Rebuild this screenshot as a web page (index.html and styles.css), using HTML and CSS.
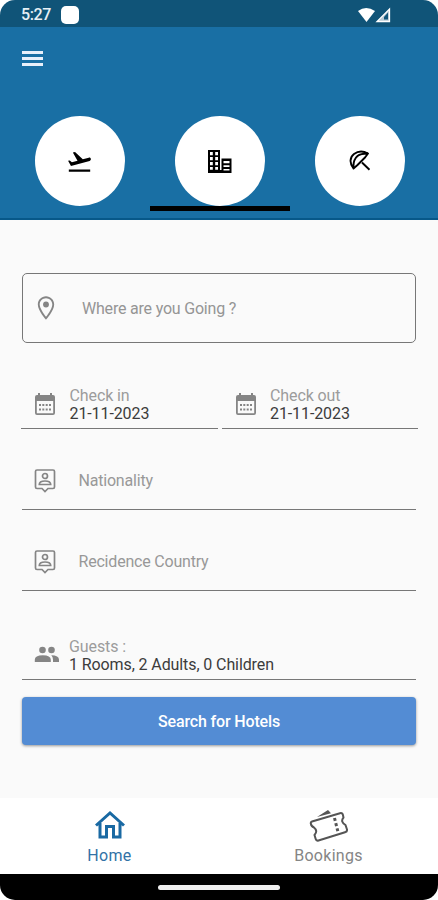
FILE: index.html
```html
<!DOCTYPE html>
<html lang="en">
<head>
<meta charset="utf-8">
<title>Hotel search</title>
<link rel="stylesheet" href="styles.css">
</head>
<body>
<div class="phone">
  <header class="status">
    <span class="time">5:27</span><span class="notice"></span>
    <svg class="signals" width="36" height="16" viewBox="0 0 36 16"><path d="M1 4Q9-2 18 4L9.500 15z" fill="#fff"/><path d="M32.500 2v12.500H20z" fill="#b9cad5" stroke="#fff" stroke-width="1.300"/><path d="M31 5.500v7h-4V10z" fill="#10567b"/></svg>
  </header>
  <section class="hero">
    <div class="menu"><i></i><i></i><i></i></div>
    <nav class="tabs">
      <div class="tab"><div class="circle"><svg width="27" height="27" viewBox="0 0 24 24"><path d="M2.500 19h19v2h-19zM22.070 9.640c-.21-.8-1.040-1.280-1.840-1.060L14.920 10l-6.900-6.430-1.930.51 4.140 7.170-4.970 1.330-1.970-1.540-1.450.39 2.590 4.490L21 11.490c.81-.23 1.280-1.050 1.070-1.850z"/></svg></div></div>
      <div class="tab active"><div class="circle"><svg width="25" height="25" viewBox="0 0 25 25"><path fill-rule="evenodd" d="M1 1h12v23H1zM3 3v3.200h2.800V3zm5.200 0v3.200H11V3zM3 8v3.200h2.800V8zm5.200 0v3.200H11V8zM3 13v3.200h2.800V13zm5.200 0v3.200H11V13zM3 18v2.800h2.800V18zm5.200 0v2.800H11V18z"/><path fill-rule="evenodd" d="M13 21h1.500V9.500h10V24H13zM16.500 12v2.200h6V12zm0 4.200v1.800h6v-1.800zm0 3.900v1.500h6v-1.500z"/></svg></div></div>
      <div class="tab"><div class="circle"><svg width="24" height="24" viewBox="0 0 24 24" fill="none" stroke="#000" stroke-width="1.900" stroke-linejoin="round"><path d="M5.500 19.500C1 14 2 8 6 5S15.500 2 20 4.500L17 8.500 9.500 16zM5.500 19.500C5 13 6.500 9.500 9.500 7S16 4.500 20 4.500M14 13.500l7.500 7.300"/></svg></div></div>
    </nav>
  </section>
  <main class="form">
    <div class="where"><svg class="pin" width="28" height="28" viewBox="0 0 24 24"><path d="M12 2C8.130 2 5 5.130 5 9c0 5.250 7 13 7 13s7-7.750 7-13c0-3.870-3.130-7-7-7zM6.600 9c0-3 2.400-5.400 5.400-5.400s5.400 2.400 5.400 5.400c0 2.880-2.880 7.590-5.400 10.500C9.920 17 6.600 11.850 6.600 9z"/><circle cx="12" cy="9" r="2.500"/></svg><span>Where are you Going ?</span></div>
    <div class="dates">
      <div class="field"><svg class="icon cal" width="22" height="24" viewBox="0 0 22 24"><path fill-rule="evenodd" d="M4 1h2v2h10V1h2v2h1q2 0 2 2v16q0 2-2 2H3q-2 0-2-2V5q0-2 2-2h1zM2.800 9v12.200h16.400V9z"/><path d="M5 12h2v2H5zm3.300 0h2v2h-2zm3.400 0h2v2h-2zm3.300 0h2v2h-2zM5 16.500h2v2H5zm3.300 0h2v2h-2zm3.400 0h2v2h-2zm3.300 0h2v2h-2z"/></svg><div class="pair"><label>Check in</label><b>21-11-2023</b></div></div>
      <div class="field"><svg class="icon cal" width="22" height="24" viewBox="0 0 22 24"><path fill-rule="evenodd" d="M4 1h2v2h10V1h2v2h1q2 0 2 2v16q0 2-2 2H3q-2 0-2-2V5q0-2 2-2h1zM2.800 9v12.200h16.400V9z"/><path d="M5 12h2v2H5zm3.300 0h2v2h-2zm3.400 0h2v2h-2zm3.300 0h2v2h-2zM5 16.500h2v2H5zm3.300 0h2v2h-2zm3.400 0h2v2h-2zm3.300 0h2v2h-2z"/></svg><div class="pair"><label>Check out</label><b>21-11-2023</b></div></div>
    </div>
    <div class="line-field"><svg class="person" width="22" height="25" viewBox="0 0 22 25" fill="none" stroke="#858585" stroke-width="1.700"><path d="M3 2h16q1.500 0 1.500 1.500v15.500q0 1.500-1.500 1.500h-5l-3 3-3-3H3q-1.500 0-1.500-1.500V3.500Q1.500 2 3 2z"/><circle cx="11" cy="8" r="2.500"/><path d="M5.300 16.500q0-3.500 5.700-3.500t5.700 3.500z"/></svg><span>Nationality</span></div>
    <div class="line-field"><svg class="person" width="22" height="25" viewBox="0 0 22 25" fill="none" stroke="#858585" stroke-width="1.700"><path d="M3 2h16q1.500 0 1.500 1.500v15.500q0 1.500-1.500 1.500h-5l-3 3-3-3H3q-1.500 0-1.500-1.500V3.500Q1.500 2 3 2z"/><circle cx="11" cy="8" r="2.500"/><path d="M5.300 16.500q0-3.500 5.700-3.500t5.700 3.500z"/></svg><span>Recidence Country</span></div>
    <div class="field guests"><svg class="icon people" width="26" height="26" viewBox="0 0 26 26"><circle cx="8.500" cy="8" r="3.300"/><circle cx="17.500" cy="8" r="3.300"/><path d="M.8 20v-2.300q0-4.500 8-4.500t8 4.500V20zM17.300 13.200q7.700.2 7.700 4.500V20h-6v-2.300q0-3-1.700-4.500z"/></svg><div class="pair"><label>Guests :</label><b>1 Rooms, 2 Adults, 0 Children</b></div></div>
    <button class="search">Search for Hotels</button>
  </main>
  <nav class="bottom">
    <a class="home"><svg width="32" height="30" viewBox="0 0 32 30" fill="none" stroke="#1969a3" stroke-width="3"><path d="M2 15.500L16 3l14 12.500M6 13v14h6.500v-10.500h7V27H26V13"/></svg><span>Home</span></a>
    <a class="bookings"><svg width="40" height="34" viewBox="0 0 40 34" fill="none" stroke="#555" stroke-width="2" stroke-linejoin="round"><path d="M3 13.500L31 5.200q2.500-.5 3 2l.5 2.500q-3.500 4 2 7.300l1.500 4.500q.4 2-2 2.800L9.500 32.500q-2.200.6-2.800-1.500L5.500 27q3.700-4-.5-7.500-2.700-1-3.200-4-.3-1.500 1.200-2z"/><path d="M8 9L19 2l3 3.200z" fill="#555" stroke="none"/><path d="M25.500 10l3.500 14" stroke-width="3" stroke-dasharray="3 2.300"/></svg><span>Bookings</span></a>
  </nav>
  <footer class="system"><i></i></footer>
</div>
</body>
</html>
```
FILE: styles.css
```css
* { box-sizing: border-box; }
body { margin: 0; background: #fff; font-family: Roboto, sans-serif; }
.phone { width: 438px; height: 900px; display: flex; flex-direction: column; overflow: hidden; border-radius: 15px; background: #fafafa; }
svg { display: block; flex: none; }
.status { height: 27px; background: #105478; display: flex; align-items: center; padding: 2px 45px 0 21px; }
.time { width: 40px; color: #e8f0f5; font-size: 16px; line-height: 24px; font-weight: 500; letter-spacing: -.4px; }
.notice { width: 18px; height: 18px; border-radius: 5px; background: #fff; }
.signals { margin-left: auto; }
.hero { height: 193px; background: #196fa4; border-bottom: 2px solid #075889; padding-top: 24px; }
.menu { display: flex; flex-direction: column; gap: 3px; margin-left: 21.500px; width: 21px; height: 15px; }
.menu i { height: 3px; background: #e8f0fb; }
.tabs { display: flex; margin: 49px 0 0 9.500px; }
.tab { width: 140px; height: 96px; display: flex; justify-content: center; border-bottom: 5px solid transparent; }
.tab.active { border-color: #000; }
.circle { width: 90px; height: 90px; margin-top: 1px; border-radius: 50%; background: #fff; display: flex; align-items: center; justify-content: center; }
.form { height: 578px; padding: 53px 22px 0; }
.where { height: 70px; border: 1px solid #777; border-radius: 5px; display: flex; align-items: center; padding-left: 9px; color: #959595; font-size: 16px; letter-spacing: -.2px; }
.where svg { fill: #858585; }
.where span { margin-left: 22px; }
.dates { display: flex; gap: 4px; margin: 34px -2px 0 -1px; }
.field { flex: 1; height: 52px; display: flex; align-items: center; border-bottom: 1px solid #777; padding-left: 13px; }
.field .icon { fill: #858585; }
.dates .icon { margin-top: 2px; }
.pair { margin: 4px 0 0 13.500px; display: flex; flex-direction: column; font-size: 16px; line-height: 18px; letter-spacing: -.1px; }
.pair label { color: #9c9c9c; }
.pair b { color: #3c3c3c; font-weight: 400; }
.line-field { height: 81px; display: flex; align-items: center; padding: 23px 0 0 11.500px; border-bottom: 1px solid #777; color: #989898; font-size: 16px; letter-spacing: -.2px; }
.line-field span { margin-left: 23px; }
.guests { height: 50px; margin-top: 39px; padding-left: 12px; }
.guests .pair { margin: 2px 0 0 9px; }
.search { display: block; width: 100%; height: 48px; margin-top: 17px; border: 0; border-radius: 4px; background: #538cd4; color: #fff; font: 500 16px Roboto, sans-serif; letter-spacing: -.15px; box-shadow: 0 1px 3px rgba(0,0,0,.4); }
.bottom { height: 76px; background: #fff; display: flex; }
.bottom a { width: 219px; display: flex; flex-direction: column; align-items: center; font-size: 16px; line-height: 20px; letter-spacing: .3px; }
.home { padding-top: 12px; color: #3172a6; }
.home span { margin-top: 6px; }
.bookings { padding-top: 10px; color: #858585; }
.bookings span { margin-top: 4px; }
.system { height: 26px; background: #000; display: flex; align-items: center; justify-content: center; }
.system i { width: 122px; height: 5px; border-radius: 3px; background: #eee; }
```
